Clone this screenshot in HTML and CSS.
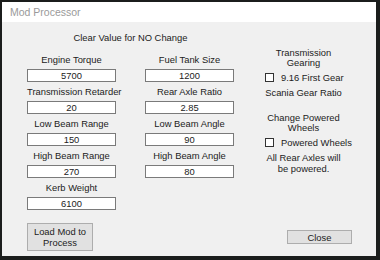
FILE: index.html
```html
<!DOCTYPE html>
<html lang="en">
<head>
    <meta charset="UTF-8">
    <title>Mod Processor</title>
    <link rel="stylesheet" href="styles.css">
</head>
<body>

    <div class="window">
        <div class="titlebar">Mod Processor</div>

        <div class="client">
            <div class="main">
                <!-- Value fields -->
                <div class="left">
                    <p class="hint">Clear Value for NO Change</p>
                    <div class="fields">
                        <div class="field">
                            <label>Engine Torque</label>
                            <input type="text" value="5700">
                        </div>
                        <div class="field">
                            <label>Fuel Tank Size</label>
                            <input type="text" value="1200">
                        </div>
                        <div class="field">
                            <label>Transmission Retarder</label>
                            <input type="text" value="20">
                        </div>
                        <div class="field">
                            <label>Rear Axle Ratio</label>
                            <input type="text" value="2.85">
                        </div>
                        <div class="field">
                            <label>Low Beam Range</label>
                            <input type="text" value="150">
                        </div>
                        <div class="field">
                            <label>Low Beam Angle</label>
                            <input type="text" value="90">
                        </div>
                        <div class="field">
                            <label>High Beam Range</label>
                            <input type="text" value="270">
                        </div>
                        <div class="field">
                            <label>High Beam Angle</label>
                            <input type="text" value="80">
                        </div>
                        <div class="field">
                            <label>Kerb Weight</label>
                            <input type="text" value="6100">
                        </div>
                    </div>
                </div>

                <!-- Options -->
                <div class="right">
                    <p class="group-title">Transmission<br>Gearing</p>
                    <label class="check"><span class="box"></span>9.16 First Gear</label>
                    <p class="note">Scania Gear Ratio</p>

                    <p class="group-title second">Change Powered<br>Wheels</p>
                    <label class="check"><span class="box"></span>Powered Wheels</label>
                    <p class="note axles">All Rear Axles will<br>be powered.</p>
                </div>
            </div>

            <div class="buttons">
                <button class="load">Load Mod to<br>Process</button>
                <button class="close">Close</button>
            </div>
        </div>
    </div>

</body>
</html>
```

FILE: styles.css
```css
/* Base styling */
body {
    margin: 0;
    padding: 2px 4px 4px 2px;
    background-color: #1b1d1c;
    font-family: "Liberation Sans", Arial, sans-serif;
    font-size: 9.4px;
    color: #222;
}

.window {
    width: 374px;
    height: 254px;
    background-color: #f0f0f0;
    display: flex;
    flex-direction: column;
}

.titlebar {
    height: 20px;
    line-height: 20px;
    padding-left: 8px;
    background-color: #fff;
    color: #9a9a9a;
    font-size: 10.5px;
}

.client {
    flex: 1;
    display: flex;
    flex-direction: column;
    padding: 9px 24px 0 25px;
}

.main {
    display: flex;
    gap: 21px;
}

p {
    margin: 0;
    white-space: nowrap;
}

/* Left side fields */
.hint {
    height: 14px;
    line-height: 14px;
    text-align: center;
    margin-bottom: 5px;
}

.fields {
    display: grid;
    grid-template-columns: 89px 89px;
    column-gap: 29px;
}

.field {
    display: flex;
    flex-direction: column;
}

.field label {
    height: 19px;
    line-height: 19px;
    text-align: center;
    white-space: nowrap;
}

.field input {
    box-sizing: border-box;
    width: 89px;
    height: 13px;
    margin: 0;
    padding: 0;
    border: 1px solid #7a7a7a;
    background-color: #fff;
    font-family: inherit;
    font-size: 9.4px;
    text-align: center;
    color: #222;
}

/* Right side options */
.right {
    width: 100px;
    display: flex;
    flex-direction: column;
    padding-top: 17px;
}

.group-title {
    line-height: 10px;
    text-align: center;
}

.group-title.second {
    margin-top: 15px;
}

.check {
    display: flex;
    align-items: center;
    gap: 7px;
    height: 10px;
    margin-top: 4px;
    padding-left: 10px;
    white-space: nowrap;
}

.box {
    box-sizing: border-box;
    width: 9px;
    height: 9px;
    border: 1px solid #333;
    background-color: #fff;
}

.note {
    margin-top: 6px;
    line-height: 10px;
    text-align: center;
}

.note.axles {
    margin-top: 5px;
    line-height: 11px;
}

/* Buttons */
.buttons {
    display: flex;
    justify-content: space-between;
    align-items: center;
    margin-top: 13px;
}

button {
    box-sizing: border-box;
    margin: 0;
    padding: 0;
    background-color: #e1e1e1;
    border: 1px solid #adadad;
    font-family: inherit;
    font-size: 9.4px;
    line-height: 11px;
    color: #222;
}

.load {
    width: 66px;
    height: 28px;
}

.close {
    width: 65px;
    height: 14px;
}
```
